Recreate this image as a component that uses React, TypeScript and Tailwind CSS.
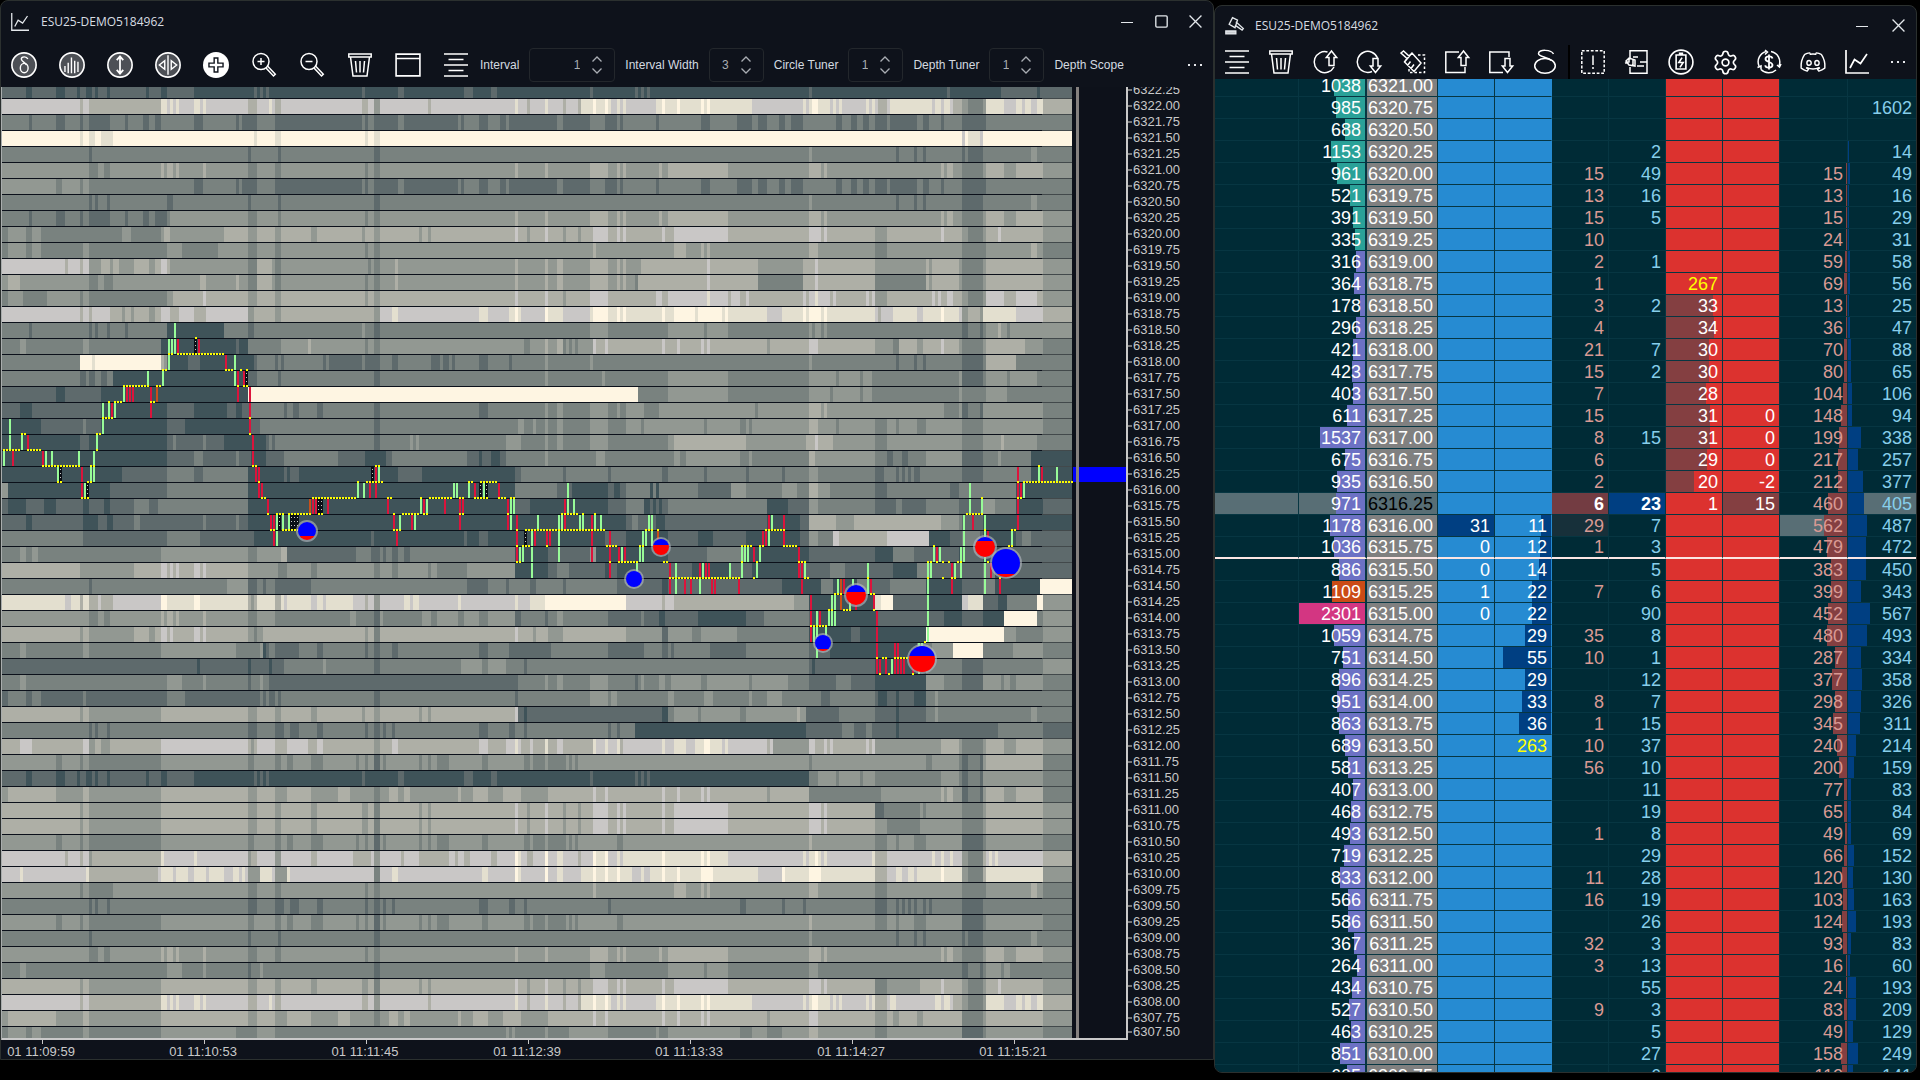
import React, { useState } from 'react';
import { Settings } from 'lucide-react';
import { FaDiscord } from 'react-icons/fa';

const SHADES: Record<string, string> = {
  a: '#3f5359',
  b: '#5e6a6c',
  c: '#79827f',
  d: '#929892',
  e: '#aeafa6',
  f: '#c9c7c6',
  g: '#e3dfcf',
  h: '#fef5e2',
};

const CANDLES: Record<string, string> = {
  g: '#98fb98',
  r: '#dc143c',
  o: '#c8501a',
  k: '#0a0f16',
  w: '#fdf6e3',
  y: '#ffff00',
};

// Runs that several price levels have in common
const DARK = '0b 8a 10b 18a 21b 25a 26b 28a 30b 31a 32b 35a 36b 48a 49b 53a 55b 64a 84b 85a 86b 87a 88b 89a 120b 121a 132b 134a 154b 157a 163b 165a 196b 197a 211b 212a 213b 214a 215b 216a';
const BRIGHT = '0f 26e 27f 29e 53g 55f 56g 57f 58g 59f 64g 66f 67g 68f 82e 85f 89g 90f 91e 93f 120e 122f 124d 126f 142e 143f 171g 172f 175e 176f 181g 182f 185f 187e 188f 192e 193g 197h 198g 201h 202g 203f 205g 206f 207g 208f 218g 220h 221g 225h 226g 233h 234g 235h 236g 250f 267g 268f 269g 270h 272g 276f 277g 278f 279g 280f 288g 289f 290g';
const BRIGHT_END = '310f 311g 313f 314g 316f 317e 320d 322c 327d 328g 334f 338g 340f 341g 343f 345g 347e';
const STEPS = '53c 64b 67c 78b 79c 80b 85c 91b 120c 121b 122c 124b 127b 132c 134b 152c 153b 154c 159b 162c 166b 168c 169b 185c 187b 196c 201b 205c 206b 207c 218b 219c 233b 236c 245b 250c 252b 255c 259b 261c 263b 267c 278b 280c 283b 285c 287b 289c 291b 295c 296b 305c 307b 309c 313b 314c 320b 328c';
const QUIET = '0c 29b 30c 82b 83c 92b 93c 124b 126c 269d 270c 298b 299c 304b 305c 307b 308c 320b 321c 322b 327c 343d 345c';
const MID = '0d 29c 32d 34c 36d 53e 54d 55e 57d 58e 59d 67e 68d 82c 85d 91c 93d 121c 122d 124c 126d 171e 172d 181e 182d';
const MID_END = '196e 202d 205e 206d 207e 208d 219e 220d 222e 242d 269e 273d 274e 275d 313e 314d 315e 317d 320c 327d 328e 334d 338e 347d';
const DIM = '0d 18c 20d 26c 27d 29c 53d 82c 84d 91c 93d 95c 97d 103c 107d 118c 119d 121c 122d 124b 126d 127c 128d 139c 140d 142c 143d 145c 149d 160c 162d 174c 176d 177c 181d 182c 187c 188d 189c 190d 191c 192d 203d';
const DIM_END = '205c 207d 269e 270d 291c 295d 298c 299d 304c 308d 320b 327c 328d 347c';
const OPEN = '0e 26d 27e 29d 53e 82d 85e 91d 93e 103d 105e 120d 122e 124c 126e 139d 140e 142d 143e 171f 172e 175d 176e 181f 182e';
const OPEN_MID = '187d 188e 192d 193e 197f 202e 205f 206e 207f 208e 220f 221e 224f 242e 269f 273e 274f 275e';
const RISE = '0d 2e 18d 27e 29d 53e 82d 85e 91d 95e 103d 112e 116d 124c 126d 129e 132d 134e 136d 152e 153d 157e 162d 167e 173d 182e 196e 197f 198e 201f 202e 220f 221e 225f 226e 233f 234e 235f 236e 255d 256e';
const FAINT = '0c 29b 30c 31b 32c 35b 36c 82b 85c 91b 94c 96b 99c 105b 107c 121b 122c 124b 126c 127b 128c 130b 131c 159b 162c 169b 171c 174b 175c 202b 203c';

// Resting depth per price level: start column + shade, first row is 6322.25
const DEPTH = [
  `${DARK} 269b 270a 315b 316a 333b 345a 346b`,
  `${BRIGHT} 291f 292e 295f 296g ${BRIGHT_END}`,
  `0c 9b 10c 18b 21c 26b 27c 29b 36c 41b 42c 47b 49c 51b ${STEPS}`,
  '0h 26g 27h 29g 31h 33g 37h 84g 85h 91g 93h 121g 122h 124g 126h 320f 321h 322g 326f 327h',
  QUIET,
  `${MID} ${MID_END}`,
  `0d 18c 20d 26c 27d 29c ${STEPS}`,
  '0c 29b 30c 31b 32c 35b 36c 55b 57c 82b 83c 92b 93c 124b 126c 269d 270c 298b 299c 304b 305c 307b 308c 320b 327c 343d 345c',
  `0c 9b 10c 18b 21c 26b 27c 29b 36c 41b 42c 47b 49c 51b 55c 56d 82c 85d 92c 93d 121c 122d 124c 126d 171e 172d 181e 182d ${MID_END}`,
  `0c 2d 8c 10d 13c 40d 43c 53d 54e 56d 74e 82d 85e 91d 93e 103d 105e 120d 121e 124d 126e 139d 140e 142d 143e 171f 172e 175d 176e 181f 182e ${OPEN_MID} 291d 295e 313f 314e 320d 322c 327d 328e 332f 333e 347d`,
  '0c 2d 8c 10d 13c 27d 29c 55d 60c 72d 82c 85d 91c 93d 121c 122d 124c 126d 197e 198d 224e 228d 233e 234d 235e 236d 269e 272d 291c 295d 320c 327c 328d 343e 345d 347c',
  '0f 21e 22f 26e 27f 29d 33e 36d 37e 39d 44e 49d 51e 53f 55e 56d 82c 85e 90d 91c 93d 122c 123d 124c 126d 131e 132d 171e 172d 181e 182d 185e 187d 196e 202d 205e 206d 207e 208d 211d 213e 235f 236e 252d 267e 271f 272e 291d 308e 309d 310e 319d 320c 327d 328e 347d',
  '0d 2e 6d 29c 32d 34c 37d 66e 68d 78e 79d 82c 85e 90d 91c 93d 121c 122d 124c 126d 131e 132d 171e 172d 181e 182d 185e 187d 196e 202d 205e 206d 207e 208d 211c 212e 235f 236e 252c 267e 271f 272e 291c 308e 309d 310e 319d 320c 327d 328e 347d',
  '0c 2d 7c 15d 26c 27d 29c 55d 57e 67f 68e 82d 85e 91d 93e 121d 122e 124d 126e 171f 172e 175e 181f 182e 187d 188e 196f 202e 218f 220e 222f 235g 236f 242e 243f 246e 248f 249e 267f 268e 269f 271g 272f 276e 277f 278e 288f 289e 290f 291d 295e 310f 311e 312f 313e 315f 317e 320d 322c 327d 328f 334e 338f 345e 347d',
  '0f 26e 27f 29e 30f 36e 40d 41e 43d 44e 49d 51e 53f 56e 59f 64e 68f 82d 84e 91d 93e 124d 126f 130g 132f 159g 162f 169g 171h 172g 173f 181h 182g 185g 187f 196g 197h 202g 205h 206g 207h 208g 220h 221g 224h 231g 232h 240g 241h 242g 255f 260g 267h 268g 269h 273g 274h 275g 291f 292e 293f 297g 305f 307g 313h 314g 319f 320d 322e 326d 327g 334g 338f 347e',
  '0c 9b 10c 29b 30c 31b 32c 35b 36c 41b 42c 55a 74c 82b 84c 120d 121c 124b 126c 196d 202c 222d 234c 235d 242c 269d 270c 271d 273c 274d 275c 320b 322c 326b 327c 328d 332e 333d 335c 336d 347d',
  '0c 6d 8c 27d 29c 53a 78b 79a 82c 93d 102e 103d 121c 122d 124c 126d 174c 176d 181e 182d 185e 187c 188d 189c 190d 191c 192d 197f 198e 201f 202e 208e 220f 221e 225f 226e 233f 234e 235f 236e 255d 256e 269f 272e 291d 295d 297c 299e 305d 307e 313f 314e 319d 320c 327d 328e 341d 347c',
  '0c 26h 30g 31h 53e 54d 55b 56a 62b 66a 84b 85c 91b 92c 93b 94c 107b 108c 109b 120c 121b 124b 126c 130b 132c 143b 146c 147b 149c 150b 151c 159b 162c 169b 170c 175c 181d 182c 196d 197c 208c 269d 270c 298b 299c 304b 305c 307b 308c 320b 327c 328e 338c',
  '0c 26b 28c 29b 31c 33b 35c 37a 82b 85c 92b 93c 124b 126c 181d 182c 200d 201c 222d 242c 269d 278c 279d 286c 287d 290c 319d 320b 327c 328d 335c 336d 345c',
  '0b 18a 21b 33a 82h 212c 222d 242c 269d 276c 277d 286c 287d 290c 319d 320c 327c 328d 335c',
  '0b 6a 10b 33a 55b 64a 75b 78a 80b 83c 94b 95c 97b 99c 105b 107c 124b 126c 159b 162c 181d 182c 185d 187c 196d 202c 205d 206c 208d 214c 219d 251c 252d 269e 273d 274e 275d 314c 319d 320b 322c 326b 327d 347c',
  '0a 13b 27c 28b 33a 55b 61a 83b 86c 124b 126c 172d 174c 177d 178c 181d 182c 185d 187c 196d 202c 208d 213c 214d 234c 235d 246c 248d 249c 250d 269e 272d 278c 279d 291c 295d 298c 299d 305c 308d 320c 327d 347c',
  '0a 26b 29a 55b 57c 58b 64b 67c 68b 74a 88b 89c 90b 91c 124b 126c 136d 137c 138d 139c 168d 173c 181d 182c 185d 187c 196d 202c 222d 224e 248d 250d 268e 271f 272e 277d 291c 295d 320c 327d 332d 333e 334d 345c',
  '0a 22a 55b 64c 67b 78c 79b 83a 88b 94c 112b 121a 128b 130c 155b 159a 160b 163a 166b 168c 181d 182c 198d 201c 224d 226c 228d 246c 249d 250c 269e 271d 291c 295b 297c 300b 302c 308d 320b 327c 332d 333c 343a',
  '0a 40b 55c 64b 67c 82a 94b 95a 96b 99a 105a 120a 132b 140a 171b 173c 187b 188c 202b 203c 220b 222c 234b 235c 248b 249c 260b 261c 269d 272c 291b 294c 298b 299c 300b 301c 302b 303c 304b 306c 320b 327c 338c 343a',
  '0d 2a 36b 55c 82a 171c 185b 190a 202b 204a 206b 208c 216a 217c 218a 219c 222c 232b 243d 248c 260d 265c 269e 272d 276c 291b 295c 316b 319c 327c 338a',
  '0b 2a 8b 14a 18b 27a 29b 34a 36b 44c 49b 52c 82a 171b 176a 202b 208c 214a 216b 217a 218b 219a 220b 222c 242c 255a 262b 269d 272c 291b 298c 300b 308c 319b 322b 327d 331c 338a 347b',
  '0b 8a 10b 27a 32b 35a 37b 44c 46b 52b 67c 68b 78c 79b 82a 205a 208b 210c 212b 218a 221b 255a 266b 269e 278d 284e 297e 300e 313d 319c 320b 327a',
  '0c 27b 29b 55c 66b 82b 84a 123b 124a 154b 155a 159b 162a 187a 201b 208a 222b 232a 237b 248a 266b 269d 272c 277f 279e 295f 309a 316b 320c 326b 327a 338b 340c 343b 347b',
  '0c 6d 8c 10d 12c 29c 53d 82c 85d 93e 95b 118c 123b 124b 126c 127b 128c 130b 132c 134b 136c 171a 182b 187b 190b 196d 198a 222b 230b 235c 248a 266a 269b 291a 297c 304b 310b 319a 320b 327a 335b',
  '0e 26d 29d 44e 49e 53f 55e 56f 57e 58f 59e 64f 66e 67f 68e 82d 85d 92c 95d 103c 105d 120d 124c 126d 130c 132d 142c 143d 145c 155d 171a 182b 185c 189b 201a 203b 205a 212b 230a 243b 250a 266b 276c 281b 291b 297a 305c 310b 318b 320b 327c 331a 335b',
  '0c 29b 30c 75d 82b 85c 87b 88c 91b 103c 155b 162c 168b 169c 176b 178c 187b 188c 205b 220a 222b 260a 273c 277a 285c 289b 296c 308a 320b 327c 331a 346h',
  '0g 21f 23g 26e 27g 29e 32f 33e 37f 53h 55g 64h 66g 82e 83d 84e 85g 91e 93g 94f 95g 103f 105g 107f 108g 117f 121e 122f 124d 126f 134g 136f 137g 139f 152g 153f 171g 172f 176g 181h 208f 220e 221f 224e 264d 269a 291g 293h 297b 309a 320f 322g 327b 332a 335c 345h 347d',
  '0d 29c 32d 34c 36d 53e 54d 55e 57d 58e 59d 67e 68d 82c 85d 91c 116d 118c 124b 126d 127c 140d 143c 145d 152c 154d 159c 162d 171b 173c 181b 182c 185d 187c 202b 208b 213c 214b 219a 221b 232a 248b 254c 262c 269b 270a 272b 273a 291a 292b 308b 314a 320b 327a 334h 345c 347d',
  '0e 26d 27e 29d 44e 49d 51e 53f 55e 56f 57e 59e 64f 66e 67f 68e 82d 84c 85d 87e 93e 121d 122e 124c 126e 171f 172e 177d 178e 181e 182d 187e 208d 220b 222d 230c 233d 245c 269a 283b 286a 291a 308h 334d 338c 347d',
  '0c 6d 8c 27d 29c 53d 78c 86d 87a 88b 89c 91b 99c 105b 107c 121b 122c 124b 126c 130b 132c 159b 162c 169b 183c 202b 214c 220b 222c 223b 224c 236b 248c 269b 276a 291a 305c 310d 317h 327c 328c 337d 347c',
  '0b 65a 66b 82a 83b 89a 90b 94c 107d 108c 124b 126c 153d 160c 162d 168c 174b 175c 269b 270a 271b 291a 308c 320b 327c 347d',
  '0c 6d 8c 55d 60c 67d 68c 82b 83c 86d 87c 89b 172c 181d 182c 185d 187c 196d 202c 211b 212c 213d 214c 219d 221c 223d 233c 235d 249c 250d 262c 269b 278c 283b 291a 308d 314c 320b 327d 333c 334d 336c 338d 347c',
  '0b 2c 8b 10c 13b 27c 28b 55c 61b 86c 87b 88c 89b 91c 92b 93c 124b 126c 171b 172c 196d 202c 203d 205c 222d 224c 234d 237c 249d 250c 255d 260c 273b 276c 291b 292a 295b 298a 299b 304a 308c 311d 312c',
  '0e 26d 27e 29d 53e 82d 85e 91d 93e 103d 105e 120d 121e 124d 126e 139d 140e 142d 143e 171f 172b 174a 175b 201b 220a 222c 224d 232c 233d 246c 248d 265e 266d 268b 279c 280c 291b 298a 299b 308c 311d 312c 343d 345c',
  `${FAINT} 205b 206c 211a 268b 280c 284b 288c 290b 298a 299b 332c 347b`,
  '0e 6f 10e 27f 29d 31e 33d 36e 53f 82e 83d 84e 85f 91e 95f 102e 105f 107e 124d 126e 130f 132e 159f 162e 168f 171g 172f 173e 176f 177e 181g 182e 185f 187e 197g 198f 201g 202f 205g 206e 207f 220g 221f 224g 228f 231g 234h 236g 240f 241g 242f 255e 256f 257d 269f 271e 274f 275e 276f 277e 288f 289e 290f 291d 313e 319d 320c 327d 328e 334d 338e 347d',
  `${DIM} 269c 270d 308c 310d 319c 320b 322c 326b 327d 328e 347c`,
  `${DARK} 269c 272d 278c 279d 286c 287d 291c 313d 319c 320b 322c 326b 327d 347c`,
  `${RISE} 269c 293d 313e 314d 315e 317d 320b 322c 326b 327d 328e 334d 338e 347c`,
  `${OPEN} ${OPEN_MID} 291b 294c 306d 307c 308d 320c 327d 328e 347d`,
  `${OPEN} ${OPEN_MID} 291d 295c 306d 320c 327d 328e 347d`,
  `${DIM} ${DIM_END}`,
  '0f 21e 22f 26e 27f 29d 30e 53g 54f 64g 65f 82d 83e 85f 91d 93f 103e 105f 117e 121e 123f 124d 126f 133e 134f 139e 142e 149f 151e 152f 154e 156f 163e 165f 171h 172g 173f 175e 177f 181h 182f 185g 187f 192e 193f 197h 198g 201h 202f 205g 206f 207g 220h 221g 233h 234g 235h 236g 242f 267g 268f 269g 271h 272g 273f 274g 275f 290g 291e 295f 310g 311f 313g 314f 316g 317f 320d 322c 327e 328f 329g 330f 331g 332f 347e',
  '0f 6g 7f 28g 29e 52f 53g 57f 58g 62f 64g 68f 69g 74f 77g 79f 80g 81f 82d 86g 90f 91d 95g 96f 124c 126f 130g 132f 160g 162f 171h 172g 173f 181h 182f 185g 187f 193g 197h 198g 201h 202g 205h 206g 207g 210f 213g 214f 216g 220h 221g 225h 226g 233h 237g 252f 260h 261g 266g 269h 273g 291e 295f 298g 300f 302g 304f 305g 307g 313h 314g 320d 322c 327e 328g 347d',
  '0d 26c 27d 29c 37d 82c 85d 91c 93d 121c 122d 124c 126d 197e 198d 224e 228d 233e 234d 235e 236d 269e 272d 291c 295d 320c 327c 328d 343e 345d 347c',
  `${FAINT} 246b 248c 260b 261c 267b 268c 291b 295c 298b 299c 300b 301c 302b 303c 304b 305c 307b 308c 309b 310c 320b 327c`,
  `${DIM} ${DIM_END}`,
  QUIET,
  `${MID} ${MID_END}`,
  '0c 6d 8c 55d 60c 67d 68c 82b 83c 86d 87c 124b 126c 196d 201c 222d 234c 235d 242c 269d 272c 320b 322c 326b 327c 328d 333c 334d 336c',
  `${OPEN} ${OPEN_MID} 291c 295d 306e 313f 314e 320d 322c 327d 328e 332f 333e 347d`,
  `${BRIGHT} 291e 295f 296g 298f ${BRIGHT_END}`,
  `${RISE} 269f 272e 291d 295e 297d 299e 305d 307e 320c 327d 328e 347d`,
  '0c 2d 8c 10d 13c 27d 29c 53d 78c 85d 91c 168d 169c 170d 171c 181d 182c 189d 196d 202c 218d 219c 222d 246c 250d 255c 260d 269e 272d 291c 295d 320b 327c 328d 347c',
];

// Trades per row: colour + column
const TRADES: Record<number, string> = {
  15: 'g57',
  16: 'g55 g56 g57 r58 k64 r65',
  17: 'g55 r74 g77',
  18: 'g48 g53 g77 r78 r80 k81',
  19: 'g40 r41 r42 r43 r49 o51 r78 r82',
  20: 'g33 g35 r36 g37 r49 r82',
  21: 'g2 g33 r82',
  22: 'g2 g6 r8 g31 r83',
  23: 'g0 r3 r13 g14 g16 g25 g30 r83',
  24: 'g18 k19 r26 g29 g30 r84 r85 k123 r124 g125 r338 g345 r346 g351',
  25: 'r26 g27 k28 r85 r86 g118 g120 r122 r124 g150 g151 g155 r157 k159 g160 k161 r165 g188 g322 r338 r339 g340',
  26: 'r88 o102 r103 r104 k105 k106 r108 r128 g139 r140 g141 r147 r152 r153 r168 g169 g170 r187 g188 g190 g322 g326 r338',
  27: 'r89 r90 g91 k92 g93 g95 k96 k97 k98 r130 g132 r136 g137 r152 r168 g169 r171 g178 g185 g186 r187 g192 g193 r196 g197 g199 g215 g216 r255 g256 r260 g320 r323 g327 r338',
  28: 'r90 g91 r131 r171 k174 g176 r177 r181 r182 g185 r196 r202 g213 g214 g216 o218 r253 r254 g255 r260 g320 g327 r328 g336',
  29: 'r171 g172 g173 g176 g185 r196 r202 r205 g206 r207 g212 g213 g246 g247 g248 r250 g252 r265 g310 r311 g312 g319 g320 g327',
  30: 'g176 r202 g211 r222 g224 r232 g233 r234 r235 g242 g246 g251 r265 r266 g267 g288 g308 g309 r316 g317 g319 g327 r329',
  31: 'r222 g224 r227 r229 g232 r236 r237 r245 r266 g278 o279 r280 g283 g288 r289 g308 r316 g327 r332',
  32: 'r269 g276 g277 o279 g282 r284 r290 g308',
  33: 'r269 g271 r272 g275 g276 g277 r291 g308',
  34: 'r269 g270 g271 g274 r291 g308',
  35: 'g271 r291 r297 r298 g305 g306',
  36: 'r291 r292 r294 g296 r297 r298 r299 r300 r303 g305',
};

// Last price dots on the line below each row: column ranges
const LAST_PRICE: Record<number, string> = {
  15: '64',
  16: '55-56 58-73',
  17: '53-54 74-76 79 81',
  18: '40-48 51-52 78 80-81',
  19: '35 37-39 49-50',
  20: '33-36 82',
  21: '6-7 31-32 82',
  22: '0-5 8-12 31',
  23: '13-25 29-30 83-84 124-125 345',
  24: '18-19 28-29 85 118 121-126 155-156 159-164 338 340-356',
  25: '26-28 86-87 103-117 128-129 139 142-149 152-153 157-161 165-167 169-170 326 338-339',
  26: '88 91-93 95-102 105-106 130 133-138 140-141 152-153 168 186-191 193 197 321-326',
  27: '89-90 93-98 130-132 171 174-200 214-216 218 254-260 327 336-337',
  28: '171 173-175 181 201-204 212-213 246-249 252-253 260-264 310 335-336',
  29: '171-172 202 205-211 220-221 246 251 265-267 308-309 311 313 315 318-319 328',
  30: '222-245 250 267-268 288 308 313 316-317 332',
  31: '277-279 289-290',
  32: '275-276 280-282 290',
  33: '269-274',
  34: '307',
  35: '291 293-294 297-302',
  36: '292 295 303',
};

// x, y, radius, share of the circle that is blue
const CIRCLES = [
  [305, 444, 9, 0.8],
  [632, 492, 8, 1],
  [659, 460, 8, 0.4],
  [854, 508, 10, 0.33],
  [821, 556, 8, 0.88],
  [920, 572, 13, 0.4],
  [983, 460, 10, 0.22],
  [1004, 476, 14, 0.88],
];

const COL = 3;
const ROW = 16;
const rowTop = (n: number) => n * ROW - 4;

const Heatmap: React.FC = () => (
  <svg
    className="block w-full h-[951px] bg-[#0d111a]"
    viewBox="0 0 1124 951"
    preserveAspectRatio="none"
    shapeRendering="crispEdges"
    role="img"
    aria-label="Depth heatmap"
  >
    <defs>
      {CIRCLES.map(([, , , share], i) => (
        <linearGradient key={i} id={`vol${i}`} x1="0" y1="0" x2="0" y2="1">
          <stop offset={share} stopColor="#0000ff" />
          <stop offset={share} stopColor="#ff0000" />
        </linearGradient>
      ))}
    </defs>

    {DEPTH.map((line, n) => {
      const runs = line.split(' ').map((t) => ({ k: parseInt(t), shade: SHADES[t.slice(-1)] }));
      return runs.map(({ k, shade }, i) => {
        const end = i + 1 < runs.length ? runs[i + 1].k * COL : 1070;
        return <rect key={`${n}-${k}-${i}`} x={k * COL} y={rowTop(n)} width={Math.max(0, end - k * COL)} height={16} fill={shade} />;
      });
    })}

    {DEPTH.map((_, n) => (
      <g key={n}>
        <rect x={0} y={rowTop(n) + 15} width={1040} height={1} fill="#0b101a" />
        <rect x={1040} y={rowTop(n) + 15} width={30} height={1} fill="#42494b" />
      </g>
    ))}

    {Object.entries(TRADES).map(([n, line]) =>
      line.split(' ').map((t) => {
        const k = parseInt(t.slice(1));
        const dark = t[0] === 'k';
        return (
          <g key={n + t}>
            <rect
              x={dark ? k * COL : k * COL + 1}
              y={rowTop(Number(n))}
              width={dark ? 3 : 2}
              height={15}
              fill={CANDLES[t[0]]}
            />
            {dark && [2, 6, 10].map((dy) => (
              <rect key={dy} x={k * COL + 1} y={rowTop(Number(n)) + dy} width={1} height={1} fill="#c9c7c6" />
            ))}
          </g>
        );
      })
    )}

    {Object.entries(LAST_PRICE).map(([n, line]) =>
      line.split(' ').map((range) => {
        const [from, to = from] = range.split('-').map(Number);
        const y = rowTop(Number(n)) + 15;
        return (
          <line
            key={n + range}
            x1={from * COL + 1}
            x2={to * COL + 3}
            y1={y}
            y2={y}
            stroke="#ffff00"
            strokeWidth={2}
            strokeDasharray="2 1"
          />
        );
      })
    )}

    {CIRCLES.map(([x, y, r], i) => (
      <g key={i} shapeRendering="auto">
        <circle cx={x} cy={y} r={r + 2} fill="#b8bcc4" fillOpacity={0.6} />
        <circle cx={x} cy={y} r={r} fill={`url(#vol${i})`} />
      </g>
    ))}

    <rect x={1071} y={380} width={53} height={15} fill="#0000ff" />
    <rect x={1074} y={0} width={3} height={951} fill="#85817f" />
  </svg>
);

type Level = {
  vol: number;
  bid?: [number | null, number];
  sold?: number;
  bought?: number;
  ask?: [number, number?];
  total?: [number | null, number];
};

const LEVELS: Level[] = [
  { vol: 1038 },
  { vol: 985, total: [null, 1602] },
  { vol: 688 },
  { vol: 1153, bought: 2, total: [null, 14] },
  { vol: 961, sold: 15, bought: 49, total: [15, 49] },
  { vol: 521, sold: 13, bought: 16, total: [13, 16] },
  { vol: 391, sold: 15, bought: 5, total: [15, 29] },
  { vol: 335, sold: 10, total: [24, 31] },
  { vol: 316, sold: 2, bought: 1, total: [59, 58] },
  { vol: 364, sold: 1, ask: [267], total: [69, 56] },
  { vol: 178, sold: 3, bought: 2, ask: [33], total: [13, 25] },
  { vol: 296, sold: 4, ask: [34], total: [36, 47] },
  { vol: 421, sold: 21, bought: 7, ask: [30], total: [70, 88] },
  { vol: 423, sold: 15, bought: 2, ask: [30], total: [80, 65] },
  { vol: 403, sold: 7, ask: [28], total: [104, 106] },
  { vol: 611, sold: 15, ask: [31, 0], total: [148, 94] },
  { vol: 1537, sold: 8, bought: 15, ask: [31, 0], total: [199, 338] },
  { vol: 675, sold: 6, ask: [29, 0], total: [217, 257] },
  { vol: 935, sold: 2, ask: [20, -2], total: [212, 377] },
  { vol: 971, sold: 6, bought: 23, ask: [1, 15], total: [460, 405] },
  { vol: 1178, bid: [31, 11], sold: 29, bought: 7, total: [562, 487] },
  { vol: 1036, bid: [0, 12], sold: 1, bought: 3, total: [479, 472] },
  { vol: 886, bid: [0, 14], bought: 5, total: [383, 450] },
  { vol: 1109, bid: [1, 22], sold: 7, bought: 6, total: [399, 343] },
  { vol: 2301, bid: [0, 22], bought: 90, total: [452, 567] },
  { vol: 1059, bid: [null, 29], sold: 35, bought: 8, total: [480, 493] },
  { vol: 751, bid: [null, 55], sold: 10, bought: 1, total: [287, 334] },
  { vol: 896, bid: [null, 29], bought: 12, total: [377, 358] },
  { vol: 951, bid: [null, 33], sold: 8, bought: 7, total: [298, 326] },
  { vol: 863, bid: [null, 36], sold: 1, bought: 15, total: [345, 311] },
  { vol: 689, bid: [null, 263], sold: 10, bought: 37, total: [240, 214] },
  { vol: 581, sold: 56, bought: 10, total: [200, 159] },
  { vol: 407, bought: 11, total: [77, 83] },
  { vol: 468, bought: 19, total: [65, 84] },
  { vol: 493, sold: 1, bought: 8, total: [49, 69] },
  { vol: 719, bought: 29, total: [66, 152] },
  { vol: 833, sold: 11, bought: 28, total: [120, 130] },
  { vol: 566, sold: 16, bought: 19, total: [103, 163] },
  { vol: 586, bought: 26, total: [124, 193] },
  { vol: 367, sold: 32, bought: 3, total: [93, 83] },
  { vol: 264, sold: 3, bought: 13, total: [16, 60] },
  { vol: 434, bought: 55, total: [24, 193] },
  { vol: 527, sold: 9, bought: 3, total: [83, 209] },
  { vol: 463, bought: 5, total: [49, 129] },
  { vol: 851, bought: 27, total: [158, 249] },
  { vol: 605, bought: 6, total: [112, 141] },
];

const LAST = 19;

const CELL = 'h-[22px] p-0 pr-1 text-right border-b border-r border-[#073642] bg-no-repeat overflow-hidden whitespace-nowrap';

const bar = (px: number) => ({ backgroundSize: `${Math.round(px)}px 100%` });

const volumeBar = (i: number) => {
  if (i === 23) return 'bg-[linear-gradient(#cb4b16,#cb4b16)]';
  if (i === 24) return 'bg-[linear-gradient(#d33682,#d33682)]';
  return i < 8 ? 'bg-[linear-gradient(#2aa198,#2aa198)]' : 'bg-[linear-gradient(#6c71c4,#6c71c4)]';
};

const Ladder: React.FC = () => (
  <table className="w-full table-fixed border-separate border-spacing-0 -mt-1 bg-[#002b36] text-white text-[18px] leading-5">
    <colgroup>
      <col className="w-[84px]" />
      <col className="w-[68px]" />
      <col className="w-[71px]" />
      <col className="w-[57px]" />
      <col className="w-[57px]" />
      <col className="w-[57px]" />
      <col className="w-[57px]" />
      <col className="w-[57px]" />
      <col className="w-[57px]" />
      <col className="w-[68px]" />
      <col className="w-[68px]" />
    </colgroup>
    <tbody>
      {LEVELS.map((l, i) => {
        const last = i === LAST;
        const line = i === 21 ? 'border-b-2 border-b-[#fbe6e4]' : '';
        const [askA, askB] = l.ask ?? [];
        const [bidA, bidB] = l.bid ?? [];
        const [sold, bought] = l.total ?? [];
        return (
          <tr key={i}>
            <td className={`${CELL} ${line} ${last ? 'bg-[#586e75]' : ''}`} />
            <td
              className={`${CELL} ${line} border-r-2 bg-right ${volumeBar(i)} ${last ? 'bg-[#586e75]' : ''}`}
              style={bar((l.vol * 68) / 2301)}
            >
              {l.vol}
            </td>
            <td className={`${CELL} ${line} ${last ? 'bg-[#586e75] text-black' : 'bg-[#808080]'}`}>
              {(6321 - i * 0.25).toFixed(2)}
            </td>
            <td className={`${CELL} ${line} ${bidA === 31 ? 'bg-[#003f82]' : 'bg-[#268bd2]'}`}>{bidA}</td>
            <td
              className={`${CELL} ${line} border-r-[#268bd2] bg-[#268bd2] bg-right bg-[linear-gradient(#003f82,#003f82)] ${bidB && bidB > 200 ? 'text-[#ffff00]' : ''}`}
              style={bar(bidB && bidB < 200 ? bidB * 0.88 : 0)}
            >
              {bidB}
            </td>
            <td
              className={`${CELL} ${line} ${
                last ? 'bg-[#733c42] font-bold' : i === 20 ? 'bg-[#17303a] text-[#d99a94]' : 'text-[#d99a94]'
              }`}
            >
              {l.sold}
            </td>
            <td className={`${CELL} ${line} ${last ? 'bg-[#003f82] font-bold' : 'text-[#87ceeb]'}`}>{l.bought}</td>
            <td
              className={`${CELL} ${line} bg-[#dc322f] bg-left bg-[linear-gradient(#843f41,#843f41)] ${askA === 267 ? 'text-[#ffff00]' : ''}`}
              style={bar(askA && askA > 1 && askA < 200 ? askA * 1.42 : 0)}
            >
              {askA}
            </td>
            <td className={`${CELL} ${line} ${last ? 'bg-[#843f41]' : 'bg-[#dc322f]'}`}>{askB}</td>
            <td
              className={`${CELL} ${line} text-[#d99a94] bg-right bg-[linear-gradient(#843f41,#843f41)] ${i === 20 ? 'bg-[#586e75]' : ''}`}
              style={bar((sold ?? 0) * 0.041)}
            >
              {sold}
            </td>
            <td
              className={`${CELL} ${line} border-r-0 text-[#87ceeb] bg-left bg-[linear-gradient(#003f82,#003f82)] ${last ? 'bg-[#586e75]' : ''}`}
              style={bar(bought && bought < 1000 ? bought * 0.039 : 0)}
            >
              {bought}
            </td>
          </tr>
        );
      })}
    </tbody>
  </table>
);

const Svg: React.FC<{ children: React.ReactNode; size?: string; width?: number }> = ({
  children,
  size = 'w-6 h-6',
  width = 1.5,
}) => (
  <svg className={`${size} overflow-visible`} viewBox="0 0 24 24" fill="none" stroke="currentColor" strokeWidth={width}>
    {children}
  </svg>
);

const Disc: React.FC<{ children: React.ReactNode }> = ({ children }) => (
  <Svg size="w-[26px] h-[26px]" width={1.3}>
    <circle cx="12" cy="12" r="11.2" fill="#4d5056" stroke="#fff" strokeWidth={1.5} />
    {children}
  </Svg>
);

const LinesIcon = () => (
  <Svg>
    <path d="M0 1h24M4.500 6.500h15M0 12h24M4.500 17.500h15M0 23h24" />
  </Svg>
);

const TrashIcon = () => (
  <Svg>
    <path d="M.8 1h22.400v3H.8zM2.500 4l2.500 19h14l2.500-19M7.500 8l1 11.500M12 8v11.500M16.500 8l-1 11.500" />
  </Svg>
);

const ChartIcon: React.FC<{ size?: string }> = ({ size }) => (
  <Svg size={size} width={1.7}>
    <path d="M1 0v23h23M5 18l4.500-8.500 6 4L22 4" />
  </Svg>
);

const UP_ARROW = 'M18.500 1l5.200 6.500h-2.700v8h-5v-8h-2.700z';
const DOWN_ARROW = 'M18.500 22.500l5.200-6.500h-2.700V8.500h-5V16h-2.700z';

const ToolButton: React.FC<{ label: string; wide?: boolean; children: React.ReactNode }> = ({ label, wide, children }) => (
  <button
    aria-label={label}
    className={`${wide ? 'w-12' : 'w-11'} h-8 shrink-0 flex items-center justify-center text-white hover:bg-white/10`}
  >
    {children}
  </button>
);

const ChartTools: React.FC = () => (
  <div className="flex shrink-0">
    <ToolButton wide label="Delta">
      <Disc>
        <path d="M15.500 6.500c-1-2.800-6-2.500-6 0 0 2 3.500 3.300 5 5.500" />
        <ellipse cx="12.200" cy="14.800" rx="3.600" ry="4.300" />
      </Disc>
    </ToolButton>
    <ToolButton wide label="Volume">
      <Disc>
        <path d="M5.500 18.500V13M8.500 19.500V10M11.500 19.500V5M14.500 19.500V8M17.500 18.500V9" />
      </Disc>
    </ToolButton>
    <ToolButton wide label="Fit height">
      <Disc>
        <path d="M12 4.500v15M9 7.500l3-3.500 3 3.500M9 16.500l3 3.500 3-3.500" strokeWidth={1.6} />
      </Disc>
    </ToolButton>
    <ToolButton wide label="Fit width">
      <Disc>
        <path d="M12 3v18M9 8v8l-5-4zM15 8v8l5-4z" />
      </Disc>
    </ToolButton>
    <ToolButton wide label="Center">
      <Svg size="w-[26px] h-[26px]">
        <circle cx="12" cy="12" r="12" fill="#fff" stroke="none" />
        <path d="M10.300 5.500h3.400v4.800h4.800v3.400h-4.800v4.800h-3.400v-4.800H5.500v-3.400h4.800z" stroke="#10141d" strokeWidth={1.3} />
      </Svg>
    </ToolButton>
    <ToolButton wide label="Zoom in">
      <Svg>
        <circle cx="9" cy="8.500" r="8" />
        <path d="M9 5v7M5.500 8.500h7M14 15l7.500 8 1.800-1.800L15.500 13" />
      </Svg>
    </ToolButton>
    <ToolButton wide label="Zoom out">
      <Svg>
        <circle cx="9" cy="8.500" r="8" />
        <path d="M5.500 8.500h7M14 15l7.500 8 1.800-1.800L15.500 13" />
      </Svg>
    </ToolButton>
    <ToolButton wide label="Clear">
      <TrashIcon />
    </ToolButton>
    <ToolButton wide label="Window">
      <Svg size="w-[26px] h-[26px]">
        <path d="M1 2h22v20H1zM1 6h22" />
      </Svg>
    </ToolButton>
    <ToolButton wide label="Ladder">
      <LinesIcon />
    </ToolButton>
  </div>
);

const LadderTools: React.FC = () => (
  <div className="flex items-center h-[34px] shrink-0">
    <ToolButton label="Ladder"><LinesIcon /></ToolButton>
    <ToolButton label="Clear"><TrashIcon /></ToolButton>
    <ToolButton label="Buy volume">
      <Svg>
        <path d="M14.500 2A10.500 10.500 0 1 0 21 17" />
        <path d={UP_ARROW} />
      </Svg>
    </ToolButton>
    <ToolButton label="Sell volume">
      <Svg>
        <path d="M15 21.500A10.500 10.500 0 1 1 20.500 8" />
        <path d={DOWN_ARROW} />
      </Svg>
    </ToolButton>
    <ToolButton label="Clear selection">
      <Svg>
        <path d="M0 3l2.500-2L8 6l3-3 9 10-7 8.500L3.500 12 6 8.500zM3.500 12L11 3M6.500 15.500l3-4M10 18.500l3-4" />
        <path d="M17 5h6.500v17.500H8V19" strokeDasharray="2.500 2" />
      </Svg>
    </ToolButton>
    <ToolButton label="Bids">
      <Svg>
        <path d="M14 2H0.800v20.500H20V17" />
        <path d={UP_ARROW} />
      </Svg>
    </ToolButton>
    <ToolButton label="Asks">
      <Svg>
        <path d="M14 22.500H0.800V2H20v5" />
        <path d={DOWN_ARROW} />
      </Svg>
    </ToolButton>
    <ToolButton label="Delta">
      <Svg>
        <path d="M20.500 4C18.500-.5 5.500-1 5.500 3.500c0 3.500 8 3 13 7" />
        <ellipse cx="12" cy="15.800" rx="10.300" ry="7.400" />
      </Svg>
    </ToolButton>
    <div className="w-0.5 mx-px h-[34px] bg-black shrink-0" />
    <ToolButton label="Alert">
      <Svg>
        <path d="M.8.800h22.400v22.400H.8z" strokeDasharray="2.800 1.700" />
        <path d="M12 5.500v9.500M12 17v2" />
      </Svg>
    </ToolButton>
    <ToolButton label="Orders">
      <Svg>
        <path d="M5 8V.800h17v22.400H5V17M8 7h5M15 12h7M12 16h7" />
        <path d="M1 11l3-3 6 2v6l-6-1zM4 8v4l-4 1M8 10v5" />
      </Svg>
    </ToolButton>
    <ToolButton label="Power">
      <Svg size="w-[26px] h-[26px]">
        <circle cx="12" cy="12" r="11" />
        <path d="M7.500 5.500h9v13h-9zM10 4h4M13 8l-3 4.500h4L11 17" />
      </Svg>
    </ToolButton>
    <ToolButton label="Settings"><Settings size={27} strokeWidth={1.5} /></ToolButton>
    <ToolButton label="Account">
      <Svg>
        <path d="M9 1.500A10.700 10.700 0 0 0 2 16M4 19.500A10.700 10.700 0 0 0 19 20M22 16A10.700 10.700 0 0 0 14 1.500" />
        <path d="M8 0l2.500 2L8 4.500M.5 17.500l3.500-1.500v3.500M20 15l2.500 2L24 14" />
        <path d="M15.500 8.500c-.5-3-7-3-7 .5s7 2.500 7 6-7 3.500-7.200.3M12 4.500v15" strokeWidth={1.800} />
      </Svg>
    </ToolButton>
    <ToolButton label="Discord">
      <FaDiscord size={26} fill="none" stroke="currentColor" strokeWidth={36} className="overflow-visible" />
    </ToolButton>
    <ToolButton label="Chart"><ChartIcon /></ToolButton>
    <button aria-label="More" className="w-10 h-8 flex items-center justify-center gap-1">
      <Dots />
    </button>
  </div>
);

const Dots = () => (
  <>
    <span className="w-0.5 h-0.5 bg-gray-200" />
    <span className="w-0.5 h-0.5 bg-gray-200" />
    <span className="w-0.5 h-0.5 bg-gray-200" />
  </>
);

const Spin: React.FC<{ id: string; label: string; start: number; wide?: boolean }> = ({ id, label, start, wide }) => {
  const [value, setValue] = useState(start);
  return (
    <>
      <label htmlFor={id} className="pt-px text-xs text-[#d4dae0] whitespace-nowrap">
        {label}
      </label>
      <div className={`${wide ? 'w-[86px]' : 'w-[55px]'} h-[34px] shrink-0 flex items-center rounded border border-[#23272c] pr-3`}>
        <input
          id={id}
          className="min-w-0 flex-1 bg-transparent text-right text-xs text-[#a9adb3] outline-none"
          value={value}
          onChange={(e) => setValue(Number(e.target.value) || 0)}
        />
        <div className="ml-3 flex flex-col gap-1.5 text-[#a9adb3]">
          <button aria-label={`Increase ${label}`} onClick={() => setValue(value + 1)}>
            <svg className="block w-2.5 h-1.5" viewBox="0 0 10 6" fill="none" stroke="currentColor" strokeWidth="1.300">
              <path d="M.5 5.500L5 1l4.500 4.500" />
            </svg>
          </button>
          <button aria-label={`Decrease ${label}`} onClick={() => setValue(value - 1)}>
            <svg className="block w-2.5 h-1.5" viewBox="0 0 10 6" fill="none" stroke="currentColor" strokeWidth="1.300">
              <path d="M.5.500L5 5l4.500-4.500" />
            </svg>
          </button>
        </div>
      </div>
    </>
  );
};

const TitleBar: React.FC<{ icon: React.ReactNode; maximize?: boolean }> = ({ icon, maximize }) => (
  <header className={`${maximize ? 'h-[41px]' : 'h-[39px]'} shrink-0 flex items-center pl-2.5 text-[#e4e8ec]`}>
    {icon}
    <h1 className={`${maximize ? 'ml-3' : 'ml-2.5'} font-['Open_Sans',sans-serif] text-xs text-[#d8dde2]`}>ESU25-DEMO5184962</h1>
    <div className="ml-auto flex">
      <button aria-label="Minimize" className="w-9 h-8 flex items-center justify-center">
        <Svg size="w-3 h-3" width={2}><path d="M0 13h24" /></Svg>
      </button>
      {maximize && (
        <button aria-label="Maximize" className="w-8 h-8 flex items-center justify-center">
          <Svg size="w-[13px] h-[13px]" width={2.500}><rect x="1.500" y="1.500" width="21" height="21" rx="2" /></Svg>
        </button>
      )}
      <button aria-label="Close" className="w-9 h-8 flex items-center justify-center">
        <Svg size="w-[13px] h-[13px]" width={2.400}><path d="M1 1l22 22M23 1L1 23" /></Svg>
      </button>
    </div>
  </header>
);

const GavelIcon = () => (
  <Svg size="w-5 h-5" width={1.600}>
    <path d="M9 2l6 3-3 9-7-4zM13 7l9 8-1.500 2L12 11" />
    <path d="M1 18h12v3.500H1z" fill="#c8ccd0" />
  </Svg>
);

const TIMES = ['11:09:59', '11:10:53', '11:11:45', '11:12:39', '11:13:33', '11:14:27', '11:15:21'];

export default function App() {
  return (
    <main className="h-screen overflow-hidden bg-black grid grid-cols-[1214fr_706fr] font-['Liberation_Sans',Arial,sans-serif]">
      <section className="min-w-0 self-start bg-[#0e121b] border border-[#2b302f] rounded-t-lg overflow-hidden">
        <TitleBar maximize icon={<ChartIcon size="w-[18px] h-[18px]" />} />
        <div className="h-[45px] flex items-center gap-2.5">
          <div className="-ml-px -mr-2.5"><ChartTools /></div>
          <Spin id="interval" label="Interval" start={1} wide />
          <Spin id="interval-width" label="Interval Width" start={3} />
          <Spin id="circle-tuner" label="Circle Tuner" start={1} />
          <Spin id="depth-tuner" label="Depth Tuner" start={1} />
          <span className="pt-px text-xs text-[#d4dae0] whitespace-nowrap">Depth Scope</span>
          <button aria-label="More" className="ml-auto w-9 h-8 flex items-center justify-center gap-1">
            <Dots />
          </button>
        </div>

        <div className="flex border-l border-[#a9adad]">
          <div className="min-w-0 flex-1 border-r-2 border-b-2 border-[#c9c9c9]">
            <Heatmap />
          </div>
          <ol className="w-[85px] h-[953px] shrink-0 overflow-hidden text-[13px] leading-4 text-[#c9c9c9]">
            {DEPTH.map((_, i) => (
              <li key={i} className={`${i === 0 ? '-mt-[5px]' : ''} ${i === 59 ? 'h-3 leading-3' : 'h-4'} flex items-center gap-px`}>
                <span className="w-1 h-0.5 bg-[#777]" />
                {(6322.25 - i * 0.25).toFixed(2)}
              </li>
            ))}
          </ol>
        </div>
        <ol className="flex -ml-10 text-[13px] leading-4 text-[#c9c9c9]">
          {TIMES.map((t) => (
            <li key={t} className="w-[162px] shrink-0 h-[19px] text-center">
              <span className="block mx-auto w-px h-1 bg-[#c9c9c9]" />
              <time className="block leading-[15px] pr-0.5">01 {t}</time>
            </li>
          ))}
        </ol>
      </section>

      <section className="min-w-0 min-h-0 mt-[5px] mb-[7px] mr-[3px] flex flex-col bg-[#0e121b] border border-[#2b302f] rounded-lg overflow-hidden">
        <TitleBar icon={<GavelIcon />} />
        <LadderTools />
        <div className="flex-1 min-h-0 overflow-hidden">
          <Ladder />
        </div>
      </section>
    </main>
  );
}
